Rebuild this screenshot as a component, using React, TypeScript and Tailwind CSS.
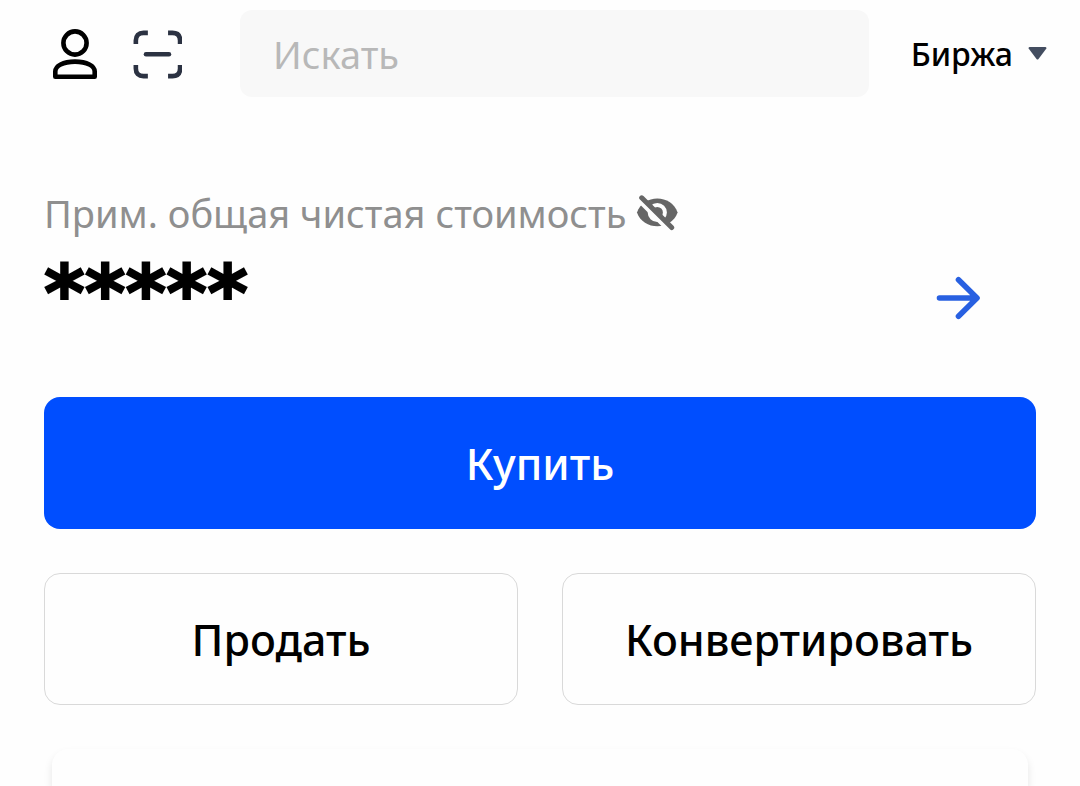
function UserIcon() {
  return (
    <svg className="h-[52px] w-12" viewBox="0 0 48 52" fill="none" stroke="#000" strokeWidth="4.6" strokeLinejoin="round" aria-hidden="true">
      <circle cx="24" cy="15" r="11.6" />
      <path d="M4.300 48.700V43.500C4.300 38 12 33.600 24 33.600S43.700 38 43.700 43.500V48.700Z" />
    </svg>
  );
}

function ScanIcon() {
  return (
    <svg className="h-13 w-13" viewBox="0 0 52 52" fill="none" stroke="#2b3242" strokeWidth="4.8" aria-hidden="true">
      <path d="M4 15.500V12Q4 4 12 4H16.500M37.500 4H42Q50 4 50 12V15.500M50 37.500V41Q50 49 42 49H37.500M16.500 49H12Q4 49 4 41V37.500" />
      <path d="M14.500 26.300H38.500" strokeLinecap="round" strokeWidth="4.600" />
    </svg>
  );
}

function HiddenIcon() {
  return (
    <svg className="h-9 w-11" viewBox="0 0 44 36" fill="none" aria-hidden="true">
      <path d="M1 17.500C4 8.500 12.500 3.600 21.300 3.600S38.500 8.500 41.600 17.500C38.500 26.500 30 31.300 21.300 31.300S4 26.500 1 17.500Z" fill="#666" />
      <circle cx="21.300" cy="17.500" r="7.600" stroke="#fefefe" strokeWidth="4" />
      <path d="M2.500 4.500L34.500 36.500" stroke="#fefefe" strokeWidth="5" />
      <path d="M5.700 2.800L35.700 32.600" stroke="#666" strokeWidth="5" strokeLinecap="round" />
    </svg>
  );
}

function Header() {
  return (
    <header className="flex items-center pt-[10px] pr-[33px] pl-[50px]">
      <button type="button" aria-label="Профиль" className="flex size-[50px] items-center justify-center">
        <UserIcon />
      </button>
      <button type="button" aria-label="Сканировать" className="ml-8 flex size-[50px] items-center justify-center">
        <ScanIcon />
      </button>
      <input
        type="search"
        aria-label="Искать"
        placeholder="Искать"
        className="ml-[58px] h-[87px] min-w-0 flex-1 rounded-xl bg-[#f8f8f8] px-[33px] text-[38px] text-black outline-none placeholder:text-[#b8b8b8]"
      />
      <div className="relative ml-[42px] flex items-center">
        <select
          aria-label="Раздел"
          className="field-sizing-content appearance-none bg-transparent pr-[34px] text-[32px] font-medium text-black outline-none"
        >
          <option>Биржа</option>
        </select>
        <svg className="pointer-events-none absolute right-0 h-[13px] w-[19px]" viewBox="0 0 19 13" aria-hidden="true">
          <path d="M1.500 0H17.500Q19 .5 18.200 1.800L10.500 12Q9.500 13.200 8.500 12L.8 1.800Q0 .5 1.500 0Z" fill="#434d60" />
        </svg>
      </div>
    </header>
  );
}

function Balance() {
  return (
    <section className="mt-[91px] flex items-end justify-between">
      <div>
        <div className="flex items-center gap-[10px] text-[#8f8f8f]">
          <h1 className="text-[38px] leading-[50px]">Прим. общая чистая стоимость</h1>
          <button type="button" aria-label="Показать баланс">
            <HiddenIcon />
          </button>
        </div>
        <p className="mt-5 font-['DejaVu_Sans',sans-serif] text-[78px] leading-[72px] font-bold [-webkit-text-stroke:2px_black]">*****</p>
      </div>
      <a href="#assets" aria-label="Открыть активы" className="mr-14 mb-[10px]">
        <svg className="h-11 w-11" viewBox="0 0 44 44" fill="none" stroke="#2860e1" strokeWidth="5.6" strokeLinecap="round" strokeLinejoin="round" aria-hidden="true">
          <path d="M3.500 22H40M22.500 3.800L41 22L22.500 40.200" />
        </svg>
      </a>
    </section>
  );
}

export default function App() {
  return (
    <div className="min-h-screen overflow-hidden bg-[#fefefe] font-['Noto_Sans',sans-serif] text-black">
      <Header />
      <main className="px-11">
        <Balance />
        <button type="button" className="mt-[67px] h-33 w-full rounded-2xl bg-[#004eff] pt-[2px] text-[43px] font-medium text-white">
          Купить
        </button>
        <div className="mt-11 grid grid-cols-2 gap-11 text-[43px] font-medium">
          <button type="button" className="h-33 rounded-2xl border border-[#d9d9d9] pt-[2px]">Продать</button>
          <button type="button" className="h-33 rounded-2xl border border-[#d9d9d9] pt-[2px]">Конвертировать</button>
        </div>
        <section aria-label="Активы" className="mx-2 mt-11 h-[37px] rounded-t-2xl bg-[#fefefe] shadow-[0_5px_8px_rgba(0,0,0,0.1)]" />
      </main>
    </div>
  );
}
